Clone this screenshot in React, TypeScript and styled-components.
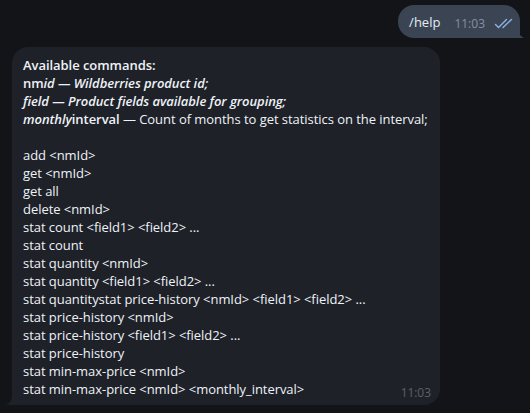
import React from "react";
import styled, { createGlobalStyle } from "styled-components";

const GlobalStyle = createGlobalStyle`
  html, body {
    margin: 0;
    padding: 0;
    background: #121418;
  }
  body {
    font-family: "Open Sans", "Noto Sans", sans-serif;
    -webkit-font-smoothing: antialiased;
  }
`;

const Chat = styled.div`
  width: 530px;
  height: 413px;
  background: #121418;
  display: flex;
  flex-direction: column;
  padding-top: 5px;
  box-sizing: border-box;
  overflow: hidden;
`;

const Row = styled.div<{ out?: boolean }>`
  display: flex;
  justify-content: ${(p) => (p.out ? "flex-end" : "flex-start")};
  padding: ${(p) => (p.out ? "0 10px 0 0" : "0 0 0 12px")};
  margin-bottom: ${(p) => (p.out ? "9px" : "0")};
`;

const OutBubble = styled.div`
  position: relative;
  display: flex;
  align-items: center;
  height: 33px;
  padding: 0 7px 0 11px;
  background: #3b4453;
  border-radius: 16px 16px 0 16px;
  color: #e3ecf7;
  font-size: 13px;
  box-sizing: border-box;
`;

const InBubble = styled.div`
  position: relative;
  width: 428px;
  padding: 9px 12px 7px 11px;
  background: #1e2128;
  border-radius: 16px 16px 16px 0;
  color: #eef2f7;
  font-size: 13px;
  line-height: 18px;
  letter-spacing: -0.05px;
  box-sizing: border-box;
`;

const Tail = styled.svg<{ side: "left" | "right" }>`
  position: absolute;
  bottom: 0;
  ${(p) => (p.side === "left" ? "left: -6px;" : "right: -4px;")}
`;

const Meta = styled.span`
  display: inline-flex;
  align-items: center;
  gap: 9px;
  margin-left: 14px;
  margin-top: 3px;
  color: #8291a4;
  font-size: 12px;
`;

const Time = styled.span`
  position: absolute;
  right: 9px;
  bottom: 5px;
  color: #59616b;
  font-size: 12px;
  line-height: 14px;
`;

const Line = styled.div`
  white-space: pre;
  min-height: 18px;
`;

const B = styled.span`
  font-weight: 600;
`;

const BI = styled.span`
  font-weight: 600;
  font-style: italic;
`;

const commands = [
  "add <nmId>",
  "get <nmId>",
  "get all",
  "delete <nmId>",
  "stat count <field1> <field2> ...",
  "stat count",
  "stat quantity <nmId>",
  "stat quantity <field1> <field2> ...",
  "stat quantitystat price-history <nmId> <field1> <field2> ...",
  "stat price-history <nmId>",
  "stat price-history <field1> <field2> ...",
  "stat price-history",
  "stat min-max-price <nmId>",
  "stat min-max-price <nmId> <monthly_interval>",
];

function Checks() {
  return (
    <svg width="19" height="11" viewBox="0 0 19 11" fill="none">
      <path d="M1.5 6.5 L4.5 9.5 L12.5 1.5" stroke="#8bb4e3" strokeWidth="1.4" strokeLinecap="round" strokeLinejoin="round" />
      <path d="M9 9.5 L17.5 1.5" stroke="#8bb4e3" strokeWidth="1.4" strokeLinecap="round" />
    </svg>
  );
}

export default function App() {
  return (
    <>
      <GlobalStyle />
      <Chat>
        <Row out>
          <OutBubble>
            /help
            <Meta>
              11:03
              <Checks />
            </Meta>
            <Tail side="right" width="6" height="10" viewBox="0 0 6 10">
              <path d="M0 0 C0 5 2 8 6 10 L0 10 Z" fill="#3b4453" />
            </Tail>
          </OutBubble>
        </Row>
        <Row>
          <InBubble>
            <Line>
              <B>Available commands:</B>
            </Line>
            <Line>
              <B>nm</B>
              <BI>id — Wildberries product id;</BI>
            </Line>
            <Line>
              <BI>field — Product fields available for grouping;</BI>
            </Line>
            <Line>
              <BI>monthly</BI>
              <B>interval</B> — Count of months to get statistics on the interval;
            </Line>
            <Line />
            {commands.map((c) => (
              <Line key={c}>{c}</Line>
            ))}
            <Time>11:03</Time>
            <Tail side="left" width="6" height="10" viewBox="0 0 6 10">
              <path d="M6 0 C6 5 4 8 0 10 L6 10 Z" fill="#1e2128" />
            </Tail>
          </InBubble>
        </Row>
      </Chat>
    </>
  );
}
